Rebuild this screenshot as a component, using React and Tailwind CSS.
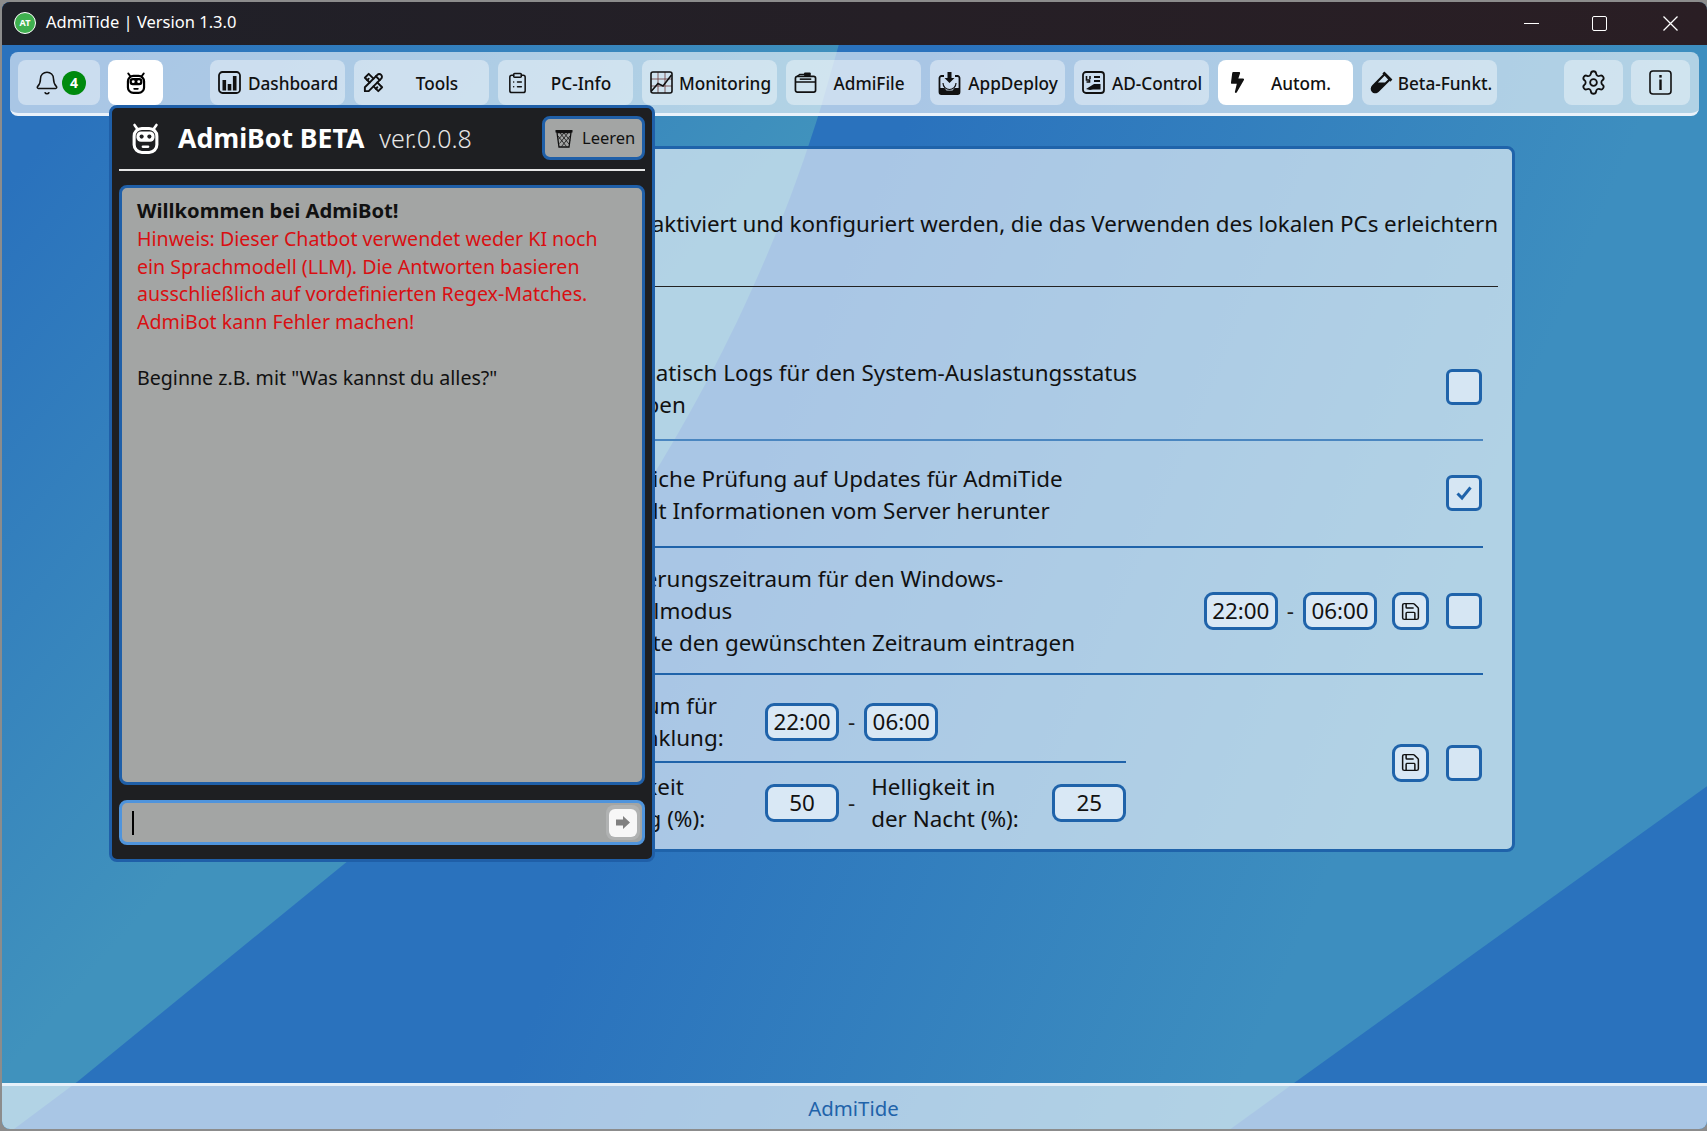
import { Bell, ClipboardList, Save, Settings } from "lucide-react";
import { FaBolt, FaVial } from "react-icons/fa";
import { TbTools } from "react-icons/tb";

function RobotIcon({ size = 24, fg = "#000", bg = "#fff" }) {
  return (
    <svg width={size} height={size} viewBox="0 0 24 24" fill="none">
      <path d="M3.5 1.5 L6 5 M20.5 1.5 L18 5" stroke={fg} strokeWidth="2" strokeLinecap="round" />
      <rect x="3.2" y="4.2" width="17.6" height="18.6" rx="6" stroke={fg} strokeWidth="2.4" fill={bg} />
      <rect x="5" y="6.5" width="14" height="8" rx="3.5" fill={fg} />
      <circle cx="9" cy="10.5" r="1.6" fill={bg} />
      <circle cx="15" cy="10.5" r="1.6" fill={bg} />
      <rect x="9" y="17.5" width="6" height="1.8" rx="0.9" fill={fg} />
    </svg>
  );
}

function DashboardIcon() {
  return (
    <svg width="23" height="23" viewBox="0 0 23 23" fill="none">
      <rect x="1" y="1" width="21" height="21" rx="3.5" stroke="#111" strokeWidth="1.8" />
      <rect x="4.5" y="9" width="3.6" height="10.5" fill="#111" />
      <rect x="9.7" y="13" width="3.6" height="6.5" fill="#111" />
      <rect x="14.9" y="5" width="3.6" height="14.5" fill="#111" />
    </svg>
  );
}

function MonitoringIcon() {
  return (
    <svg width="23" height="23" viewBox="0 0 23 23" fill="none">
      <path d="M8 1v21M15 1v21M1 8h21M1 15h21" stroke="#6b3a3a" strokeWidth="0.8" />
      <rect x="1" y="1" width="21" height="21" rx="2" stroke="#111" strokeWidth="1.6" />
      <path d="M1.5 20 L8 12.5 L13 15 L21.5 4" stroke="#111" strokeWidth="1.6" />
    </svg>
  );
}

function FileIcon() {
  return (
    <svg width="24" height="23" viewBox="0 0 24 23" fill="none">
      <rect x="1.5" y="5" width="21" height="16.5" rx="2" stroke="#111" strokeWidth="1.8" />
      <path d="M1.5 11h21" stroke="#111" strokeWidth="1.6" />
      <path d="M3.5 5 L6 3h6" stroke="#111" strokeWidth="1.4" />
      <rect x="10.5" y="1" width="7" height="4" rx="1" fill="#111" />
      <rect x="6" y="7.2" width="12" height="1.6" fill="#111" />
    </svg>
  );
}

function DeployIcon() {
  return (
    <svg width="23" height="24" viewBox="0 0 23 24" fill="none">
      <path d="M6 5H3.5A2 2 0 0 0 1.5 7v14a2 2 0 0 0 2 2h16a2 2 0 0 0 2-2V7a2 2 0 0 0-2-2H17" stroke="#111" strokeWidth="1.8" />
      <path d="M1.5 17h5l2 2.5h6l2-2.5h5v4a2 2 0 0 1-2 2h-16a2 2 0 0 1-2-2z" fill="#111" />
      <path d="M9.5 1h4v6h3l-5 5-5-5h3z" fill="#111" />
      <path d="M5 12a6.5 6.5 0 0 0 13 0" stroke="#111" strokeWidth="1.2" />
    </svg>
  );
}

function AdIcon() {
  return (
    <svg width="23" height="23" viewBox="0 0 23 23" fill="none">
      <rect x="1" y="1" width="21" height="21" rx="3" stroke="#111" strokeWidth="1.8" />
      <path d="M4.5 5v4h3v2h-3M8 5v3" stroke="#111" strokeWidth="1.6" />
      <path d="M12 5h6v2h-6zM12 9h6v2h-6z" fill="#111" />
      <path d="M4 18 L12 13 h6.5 v5.5 H11 L8 19z" fill="#111" />
    </svg>
  );
}

function InfoIcon() {
  return (
    <svg width="23" height="25" viewBox="0 0 23 25" fill="none">
      <rect x="1" y="1" width="21" height="23" rx="3" stroke="#111" strokeWidth="1.6" />
      <rect x="10.3" y="5" width="2.4" height="2.6" fill="#111" />
      <rect x="10.3" y="9.5" width="2.4" height="10.5" fill="#111" />
    </svg>
  );
}

function TrashIcon() {
  return (
    <svg width="20" height="20" viewBox="0 0 20 20" fill="none">
      <path d="M1.5 2h17v2.5h-17z" fill="#111" />
      <path d="M3 4.5 L5 19h10l2-14.5z" stroke="#111" strokeWidth="1.3" />
      <path d="M4 8l8.5 10.5M6 5l9 11M10 5l6 7.5M16 8L7.5 18.5M14 5L5.500 15.500M10 5L4.300 11.500" stroke="#111" strokeWidth="0.8" />
    </svg>
  );
}

function SendArrow() {
  return (
    <svg width="14" height="13" viewBox="0 0 14 13">
      <path d="M0 3.500h7V0l7 6.500-7 6.500V9.500H0z" fill="#808080" />
    </svg>
  );
}

function NavTab({ icon, label, active }) {
  return (
    <div className={`flex h-[45px] w-[135px] items-center rounded-[8px] pl-2 text-[17.2px] font-medium text-[#111] ${active ? "bg-white" : "bg-white/40"}`}>
      <span className="flex w-[23px] shrink-0 justify-center">{icon}</span>
      <span className="flex-1 whitespace-nowrap pt-[2px] text-center">{label}</span>
    </div>
  );
}

function CheckBox({ checked }) {
  return (
    <div className="grid h-9 w-9 shrink-0 place-items-center rounded-[6px] border-[3px] border-[#1f63aa] bg-[#d6e6f3]">
      {checked && (
        <svg width="18" height="16" viewBox="0 0 18 16" fill="none">
          <path d="M2.500 8.500 L7 13 L15.500 2.500" stroke="#1f63aa" strokeWidth="3" />
        </svg>
      )}
    </div>
  );
}

function ValueBox({ value }) {
  return (
    <div className="flex h-[38px] w-[74px] shrink-0 items-center justify-center rounded-[9px] border-[3px] border-[#1f63aa] bg-[#d9e8f5] text-[22.4px] text-[#111]">
      {value}
    </div>
  );
}

function SaveButton() {
  return (
    <div className="grid h-[38px] w-[37px] shrink-0 place-items-center rounded-[9px] border-[3px] border-[#1f63aa] bg-[#d9e8f5]">
      <Save size={21} color="#111" strokeWidth={1.7} />
    </div>
  );
}

function Dash() {
  return <span className="text-[22.4px] leading-none text-[#222]">-</span>;
}

function Wallpaper() {
  return (
    <svg className="absolute inset-0 h-full w-full" viewBox="0 0 1707 1131" preserveAspectRatio="none">
      <defs>
        <linearGradient id="base" gradientUnits="userSpaceOnUse" x1="812" y1="339" x2="1442" y2="601">
          <stop offset="0" stopColor="#2a72bd" />
          <stop offset="1" stopColor="#3d8ebf" />
        </linearGradient>
        <linearGradient id="petal" gradientUnits="userSpaceOnUse" x1="60" y1="120" x2="500" y2="500">
          <stop offset="0" stopColor="#2a72bd" />
          <stop offset="1" stopColor="#4092bd" />
        </linearGradient>
      </defs>
      <rect width="1707" height="1131" fill="url(#base)" />
      <path d="M0 0 H850 L820 105 C760 300 640 560 345 863 L76 1083 L0 1140 Z" fill="url(#petal)" />
      <path d="M1707 787 L1296 1083 L1230 1131 H1707 Z" fill="#2a72bd" />
    </svg>
  );
}

export default function App() {
  return (
    <div className="h-screen w-full overflow-hidden bg-[#8c8c8c] pb-[2px] pl-[2px] pt-[2px] font-['Noto_Sans',sans-serif]">
      <div className="relative flex h-full flex-col overflow-hidden rounded-[8px]">
        <Wallpaper />

        <div className="relative flex h-[43px] shrink-0 items-center bg-gradient-to-r from-[#1f2028] to-[#2a1e24] pl-3 text-white">
          <div className="mt-[-2px] grid h-[22px] w-[22px] place-items-center rounded-full border border-white bg-[#3fb04f] text-[9px] font-bold leading-none">AT</div>
          <span className="ml-[10px] mt-[-2px] text-[16.5px]">AdmiTide | Version 1.3.0</span>
          <div className="ml-auto flex items-center pr-[29px]">
            <div className="h-px w-[15px] bg-white" />
            <div className="ml-[53px] h-[15px] w-[15px] rounded-[2px] border-[1.5px] border-white" />
            <svg className="ml-[56px]" width="15" height="15" viewBox="0 0 15 15">
              <path d="M0.500 0.500 L14.500 14.500 M14.500 0.500 L0.500 14.500" stroke="#fff" strokeWidth="1.3" />
            </svg>
          </div>
        </div>

        <div className="relative flex min-h-0 flex-1 flex-col">
          <div className="ml-2 mr-2 mt-[7px] flex h-[64px] shrink-0 items-start rounded-[8px] border-b-[3px] border-[#eaf2fa] bg-white/60 pl-2 pt-2">
            <div className="flex h-[45px] w-[82px] items-center rounded-[8px] bg-white/40 pl-[16px]">
              <Bell size={26} color="#111" strokeWidth={1.4} />
              <div className="ml-[2px] grid h-6 w-6 place-items-center rounded-full bg-[#008a0e] text-[14px] font-bold text-white">4</div>
            </div>
            <div className="ml-2 grid h-[45px] w-[55px] place-items-center rounded-[8px] bg-white">
              <RobotIcon size={22} />
            </div>
            <div className="ml-[47px] flex gap-[9px]">
              <NavTab icon={<DashboardIcon />} label="Dashboard" />
              <NavTab icon={<TbTools size={27} color="#111" />} label="Tools" />
              <NavTab icon={<ClipboardList size={28} color="#111" strokeWidth={1.6} />} label="PC-Info" />
              <NavTab icon={<MonitoringIcon />} label="Monitoring" />
              <NavTab icon={<FileIcon />} label="AdmiFile" />
              <NavTab icon={<DeployIcon />} label="AppDeploy" />
              <NavTab icon={<AdIcon />} label="AD-Control" />
              <NavTab icon={<FaBolt size={21} color="#111" />} label="Autom." active />
              <NavTab icon={<FaVial size={23} color="#111" />} label="Beta-Funkt." />
            </div>
            <div className="ml-[67px] grid h-[45px] w-[59px] place-items-center rounded-[8px] bg-white/40">
              <Settings size={27} color="#111" strokeWidth={1.6} />
            </div>
            <div className="ml-2 grid h-[45px] w-[59px] place-items-center rounded-[8px] bg-white/40">
              <InfoIcon />
            </div>
          </div>

          <div className="ml-[190px] mr-[192px] mt-[30px] h-[706px] shrink-0 rounded-[8px] border-[3px] border-[#1f63aa] bg-white/60 text-[22.4px] leading-[32px] text-[#111]">
            <div className="mx-[14px] whitespace-nowrap border-b border-[#222] pb-[46px] pt-[59px] text-right tracking-[-0.05px]">
              Hier können Funktionen aktiviert und konfiguriert werden, die das Verwenden des lokalen PCs erleichtern
            </div>

            <div className="ml-[14px] mr-[29px]">
              <div className="flex items-center justify-between border-b-2 border-[#4a86c0] pb-[18px] pl-[376px] pr-px pt-[70px]">
                <div className="whitespace-nowrap">
                  <div>Automatisch Logs für den System-Auslastungsstatus</div>
                  <div className="-ml-[2px]">schreiben</div>
                </div>
                <div className="mb-[5px]"><CheckBox /></div>
              </div>

              <div className="flex items-center justify-between border-b-2 border-[#1f63aa] pb-[19px] pl-[376px] pr-px pt-[22px]">
                <div className="whitespace-nowrap">
                  <div>Stündliche Prüfung auf Updates für AdmiTide</div>
                  <div className="-ml-[4px]">Das lädt Informationen vom Server herunter</div>
                </div>
                <div className="mb-[5px]"><CheckBox checked /></div>
              </div>

              <div className="flex items-center justify-between border-b-2 border-[#1f63aa] pb-[14px] pl-[376px] pr-px pt-[15px]">
                <div className="whitespace-nowrap">
                  <div className="-ml-[13px]">Verzögerungszeitraum für den Windows-</div>
                  <div>Dunkelmodus</div>
                  <div className="pl-[39px]">Bitte den gewünschten Zeitraum eintragen</div>
                </div>
                <div className="flex items-center">
                  <ValueBox value="22:00" />
                  <span className="mx-[9px]"><Dash /></span>
                  <ValueBox value="06:00" />
                  <div className="ml-[15px]"><SaveButton /></div>
                  <div className="ml-[17px]"><CheckBox /></div>
                </div>
              </div>

              <div className="flex items-center justify-between pl-[376px] pr-px pt-[15px]">
                <div className="w-[541px] whitespace-nowrap">
                  <div className="flex items-center border-b-2 border-[#1f63aa] pb-[7px]">
                    <div className="w-[180px] shrink-0">
                      <div>Zeitraum für</div>
                      <div className="pl-[4px]">Abdunklung:</div>
                    </div>
                    <ValueBox value="22:00" />
                    <span className="mx-[9px]"><Dash /></span>
                    <ValueBox value="06:00" />
                  </div>
                  <div className="flex items-center pt-[8px]">
                    <div className="w-[180px] shrink-0">
                      <div>Helligkeit</div>
                      <div>am Tag (%):</div>
                    </div>
                    <ValueBox value="50" />
                    <span className="ml-[9px] mr-[16px]"><Dash /></span>
                    <div className="w-[181px] shrink-0">
                      <div>Helligkeit in</div>
                      <div>der Nacht (%):</div>
                    </div>
                    <ValueBox value="25" />
                  </div>
                </div>
                <div className="flex items-center">
                  <SaveButton />
                  <div className="ml-[17px]"><CheckBox /></div>
                </div>
              </div>
            </div>
          </div>

          <div className="absolute left-[107px] top-[60px] flex h-[757px] w-[546px] flex-col rounded-[8px] border-[3px] border-[#1f5fa8] bg-[#1e1f22] px-[7px]">
            <div className="flex h-[63px] shrink-0 items-center border-b-2 border-[#e6e6e6] pl-[11px]">
              <RobotIcon size={31} fg="#fff" bg="#1e1f22" />
              <span className="ml-[17px] text-[26.6px] font-bold text-white">AdmiBot BETA</span>
              <span className="ml-[15px] text-[25px] font-light text-[#e6e6e6]">ver.0.0.8</span>
              <div className="ml-auto mt-[-1px] flex h-[44px] w-[103px] items-center rounded-[8px] border-[3px] border-[#1f5fa8] bg-[#a3a5a4] pl-[9px] text-[16.5px] text-[#111]">
                <TrashIcon />
                <span className="ml-2">Leeren</span>
              </div>
            </div>
            <div className="mt-[14px] h-[600px] shrink-0 rounded-[8px] border-[3px] border-[#1f5fa8] bg-[#a3a5a4] pl-[15px] pt-[9px] text-[19.6px] leading-[27.8px] text-[#111]">
              <div className="text-[20.2px] font-bold">Willkommen bei AdmiBot!</div>
              <div className="text-[#d90f12]">Hinweis: Dieser Chatbot verwendet weder KI noch</div>
              <div className="text-[#d90f12]">ein Sprachmodell (LLM). Die Antworten basieren</div>
              <div className="text-[#d90f12]">ausschließlich auf vordefinierten Regex-Matches.</div>
              <div className="text-[#d90f12]">AdmiBot kann Fehler machen!</div>
              <div className="mt-[27.800px]">Beginne z.B. mit "Was kannst du alles?"</div>
            </div>
            <div className="mt-[15px] flex h-[45px] shrink-0 items-center rounded-[8px] border-[3px] border-[#4f94dc] bg-[#a3a5a4] pl-[10px] pr-[2px]">
              <div className="h-6 w-[2px] bg-black" />
              <div className="ml-auto grid h-[35px] w-[34px] place-items-center rounded-[8px] bg-[#b0b2b2]">
                <div className="grid h-7 w-7 place-items-center rounded-[6px] bg-[#f7f7f7]">
                  <SendArrow />
                </div>
              </div>
            </div>
          </div>
        </div>

        <div className="relative flex h-[46px] shrink-0 items-center justify-center border-t-[3px] border-[#e6f0f9] bg-white/60 pr-[2px] pt-[1px] text-[20.4px] text-[#1f63aa]">
          AdmiTide
        </div>
      </div>
    </div>
  );
}
